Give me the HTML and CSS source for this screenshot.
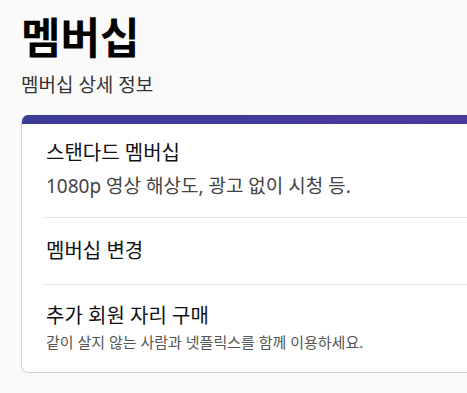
FILE: index.html
```html
<!DOCTYPE html>
<html lang="ko">
<head>
<meta charset="utf-8">
<link rel="stylesheet" href="styles.css">
</head>
<body>
<div class="page">
  <h1 class="title">멤버십</h1>
  <p class="subtitle">멤버십 상세 정보</p>
  <div class="card">
    <div class="card-bar"></div>
    <div class="row row-first">
      <div class="row-title">스탠다드 멤버십</div>
      <div class="row-desc">1080p 영상 해상도, 광고 없이 시청 등.</div>
    </div>
    <div class="row row-mid">
      <div class="row-title">멤버십 변경</div>
    </div>
    <div class="row row-last">
      <div class="row-title">추가 회원 자리 구매</div>
      <div class="row-note">같이 살지 않는 사람과 넷플릭스를 함께 이용하세요.</div>
    </div>
  </div>
</div>
</body>
</html>
```

FILE: styles.css
```css
html, body {
  margin: 0;
  padding: 0;
  background: #fafafa;
  overflow: hidden;
}
body {
  font-family: "Noto Sans", "Noto Sans CJK KR", sans-serif;
  color: #000;
}
.page {
  padding: 12px 0 0 21px;
  width: 520px;
}
.title {
  margin: 0;
  font-size: 43px;
  font-weight: 700;
  line-height: 52px;
}
.subtitle {
  margin: 8px 0 0;
  font-size: 19px;
  line-height: 26px;
  color: #333;
}
.card {
  margin-top: 17px;
  background: #fff;
  border: 1px solid #cfcfcf;
  border-top: none;
  border-radius: 7px;
  overflow: hidden;
}
.card-bar {
  height: 9px;
  background: linear-gradient(90deg, #3b3b96, #4d3aa0);
}
.row {
  margin-left: 20px;
  border-bottom: 1px solid #e6e6e6;
}
.row:last-child {
  border-bottom: none;
}
.row-first {
  padding: 15px 0 18px 4px;
}
.row-mid {
  padding: 19px 0 19px 4px;
}
.row-last {
  padding: 17px 0 20px 4px;
}
.row-title {
  font-size: 20px;
  line-height: 28px;
  color: #111;
}
.row-desc {
  margin-top: 6px;
  font-size: 19px;
  line-height: 26px;
  color: #444;
}
.row-note {
  margin-top: 2px;
  font-size: 15px;
  line-height: 20px;
  color: #555;
}
```
